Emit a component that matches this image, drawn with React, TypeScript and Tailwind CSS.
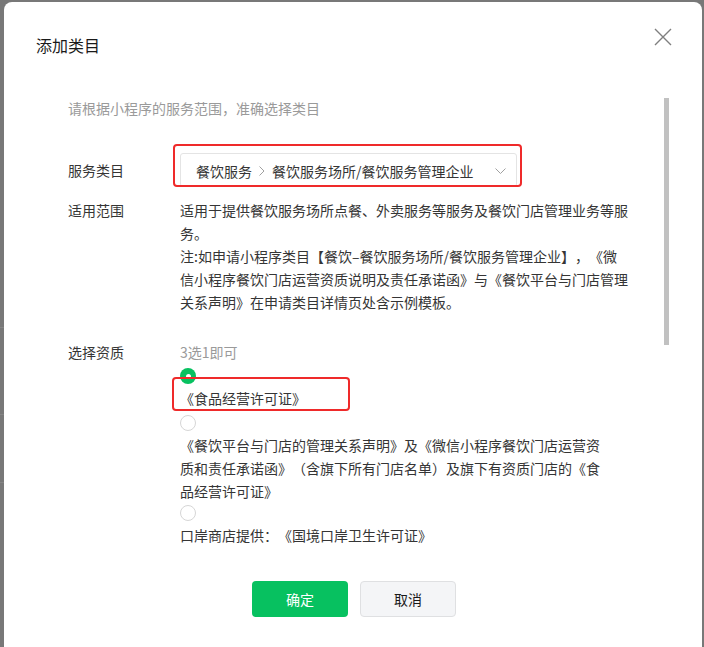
import React from "react";

function Radio({ checked }: { checked?: boolean }) {
  if (checked) {
    return (
      <div className="w-[16px] h-[16px] rounded-full bg-[#07c160] flex items-center justify-center">
        <div className="w-[5px] h-[5px] rounded-full bg-white" />
      </div>
    );
  }
  return <div className="w-[16px] h-[16px] rounded-full border border-[#d6d6d6] bg-white" />;
}

export default function App() {
  return (
    <div className="w-[704px] h-[647px] bg-[#787878] overflow-hidden flex font-['Noto_Sans_CJK_SC','Noto_Sans',sans-serif] text-[14px] text-[#353535] [text-spacing-trim:space-all]">
      <div className="w-[4px] shrink-0 flex flex-col">
        <div className="h-[327px]" />
        <div className="h-[1px] bg-[#858585]" />
        <div className="h-[86px]" />
        <div className="h-[1px] bg-[#858585]" />
        <div className="h-[67px]" />
        <div className="h-[1px] bg-[#858585]" />
      </div>
      <div className="relative mt-[2px] w-[698px] h-[660px] shrink-0 bg-white rounded-[8px]">
        <div className="pl-[32px] pt-[31px] text-[16px] leading-[24px] text-[#1a1a1a]">添加类目</div>
        <svg
          className="absolute left-[650px] top-[26px]"
          width="18"
          height="18"
          viewBox="0 0 18 18"
          fill="none"
          stroke="#7f7f7f"
          strokeWidth="1.4"
        >
          <path d="M1 1 L17 17 M17 1 L1 17" />
        </svg>

        <div className="relative mt-[41px] h-[462px] overflow-hidden pl-[64px]">
          <div className="absolute left-[660px] top-0 w-[5px] h-[247px] bg-[#c1c1c1]" />
          <div className="leading-[20px] text-[#9a9a9a]">请根据小程序的服务范围，准确选择类目</div>

          <div className="mt-[35px] flex items-center">
            <div className="w-[112px] shrink-0">服务类目</div>
            <div className="relative w-[337px] h-[34px] border border-[#e4e4e4] rounded-[3px] flex items-center pl-[15px] pr-[10px] pt-[2px]">
              <span className="whitespace-nowrap">餐饮服务</span>
              <svg className="mx-[7px]" width="6" height="10" viewBox="0 0 6 10" fill="none" stroke="#a0a0a0" strokeWidth="1">
                <path d="M0.5 0.5 L5 5 L0.5 9.5" />
              </svg>
              <span className="whitespace-nowrap">餐饮服务场所/餐饮服务管理企业</span>
              <svg className="ml-auto" width="11" height="7" viewBox="0 0 11 7" fill="none" stroke="#a0a0a0" strokeWidth="1">
                <path d="M0.5 0.5 L5.5 5.5 L10.5 0.5" />
              </svg>
              <div className="absolute left-[-8px] top-[-10px] w-[349px] h-[43px] border-2 border-[#ef2a2a] rounded-[4px]" />
            </div>
          </div>

          <div className="mt-[12px] flex items-start leading-[23px]">
            <div className="w-[112px] shrink-0">适用范围</div>
            <div className="whitespace-nowrap">
              适用于提供餐饮服务场所点餐、外卖服务等服务及餐饮门店管理业务等服
              <br />
              务。
              <br />
              注:如申请小程序类目【餐饮–餐饮服务场所/餐饮服务管理企业】，《微
              <br />
              信小程序餐饮门店运营资质说明及责任承诺函》与《餐饮平台与门店管理
              <br />
              关系声明》在申请类目详情页处含示例模板。
            </div>
          </div>

          <div className="mt-[27px] flex items-start leading-[23px]">
            <div className="w-[112px] shrink-0">选择资质</div>
            <div className="flex flex-col whitespace-nowrap">
              <div className="text-[#9a9a9a]">3选1即可</div>
              <div className="mt-[1px] h-[22px] flex items-center">
                <Radio checked />
              </div>
              <div className="relative">
                《食品经营许可证》
                <div className="absolute left-[-8px] top-[-10px] w-[178px] h-[34px] border-2 border-[#ef2a2a] rounded-[4px]" />
              </div>
              <div className="mt-[2px] h-[22px] flex items-center">
                <Radio />
              </div>
              <div>
                《餐饮平台与门店的管理关系声明》及《微信小程序餐饮门店运营资
                <br />
                质和责任承诺函》（含旗下所有门店名单）及旗下有资质门店的《食
                <br />
                品经营许可证》
              </div>
              <div className="mt-[-1px] h-[22px] flex items-center">
                <Radio />
              </div>
              <div>口岸商店提供：《国境口岸卫生许可证》</div>
            </div>
          </div>
        </div>

        <div className="flex justify-center gap-[12px] pt-[21px] pl-[2px]">
          <div className="w-[96px] h-[36px] rounded-[4px] bg-[#07c160] text-white flex items-center justify-center">确定</div>
          <div className="w-[96px] h-[36px] rounded-[4px] bg-[#f4f5f7] border border-[#dfe0e2] text-[#1a1a1a] flex items-center justify-center">取消</div>
        </div>
      </div>
    </div>
  );
}
